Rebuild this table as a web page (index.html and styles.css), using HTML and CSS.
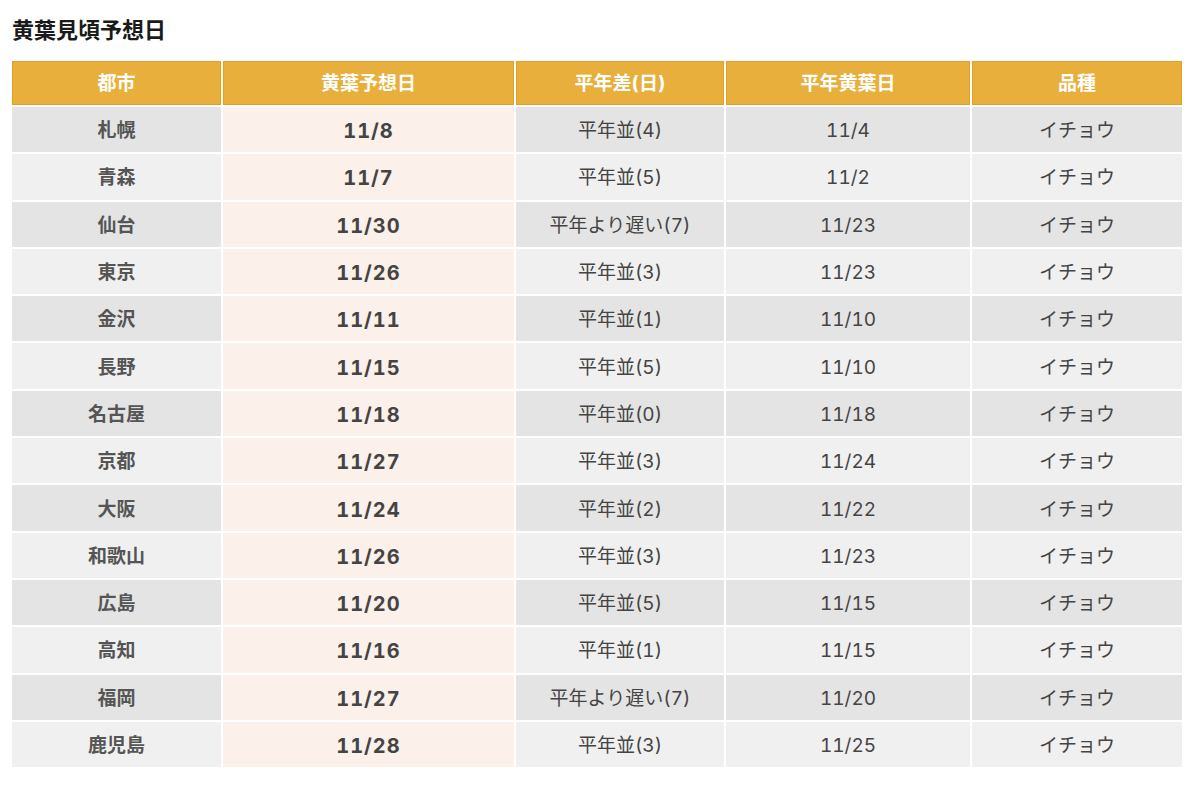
FILE: index.html
```html
<!DOCTYPE html>
<html lang="ja">
<head>
<meta charset="utf-8">
<link rel="stylesheet" href="styles.css">
</head>
<body>
<div class="page">
  <h2 class="title">黄葉見頃予想日</h2>
  <table class="tbl">
    <colgroup>
      <col class="c1"><col class="c2"><col class="c3"><col class="c4"><col class="c5">
    </colgroup>
    <thead>
      <tr><th>都市</th><th>黄葉予想日</th><th>平年差(日)</th><th>平年黄葉日</th><th>品種</th></tr>
    </thead>
    <tbody>
      <tr><td class="city">札幌</td><td class="date">11/8</td><td>平年並(4)</td><td>11/4</td><td>イチョウ</td></tr>
      <tr><td class="city">青森</td><td class="date">11/7</td><td>平年並(5)</td><td>11/2</td><td>イチョウ</td></tr>
      <tr><td class="city">仙台</td><td class="date">11/30</td><td>平年より遅い(7)</td><td>11/23</td><td>イチョウ</td></tr>
      <tr><td class="city">東京</td><td class="date">11/26</td><td>平年並(3)</td><td>11/23</td><td>イチョウ</td></tr>
      <tr><td class="city">金沢</td><td class="date">11/11</td><td>平年並(1)</td><td>11/10</td><td>イチョウ</td></tr>
      <tr><td class="city">長野</td><td class="date">11/15</td><td>平年並(5)</td><td>11/10</td><td>イチョウ</td></tr>
      <tr><td class="city">名古屋</td><td class="date">11/18</td><td>平年並(0)</td><td>11/18</td><td>イチョウ</td></tr>
      <tr><td class="city">京都</td><td class="date">11/27</td><td>平年並(3)</td><td>11/24</td><td>イチョウ</td></tr>
      <tr><td class="city">大阪</td><td class="date">11/24</td><td>平年並(2)</td><td>11/22</td><td>イチョウ</td></tr>
      <tr><td class="city">和歌山</td><td class="date">11/26</td><td>平年並(3)</td><td>11/23</td><td>イチョウ</td></tr>
      <tr><td class="city">広島</td><td class="date">11/20</td><td>平年並(5)</td><td>11/15</td><td>イチョウ</td></tr>
      <tr><td class="city">高知</td><td class="date">11/16</td><td>平年並(1)</td><td>11/15</td><td>イチョウ</td></tr>
      <tr><td class="city">福岡</td><td class="date">11/27</td><td>平年より遅い(7)</td><td>11/20</td><td>イチョウ</td></tr>
      <tr><td class="city">鹿児島</td><td class="date">11/28</td><td>平年並(3)</td><td>11/25</td><td>イチョウ</td></tr>
    </tbody>
  </table>
</div>
</body>
</html>
```

FILE: styles.css
```css
html, body {
  margin: 0;
  padding: 0;
  background: #ffffff;
}
.page {
  padding: 16px 0 0 10px;
  font-family: Inter, "Noto Sans CJK JP", sans-serif;
  font-variant-numeric: tabular-nums;
}
.title {
  margin: 0 0 0 2px;
  font-size: 22px;
  line-height: 28px;
  font-weight: 700;
  color: #1a1a1a;
}
.tbl {
  margin-top: 15px;
  width: 1174px;
  table-layout: fixed;
  border-collapse: separate;
  border-spacing: 2px;
}
.c1 { width: 209px; }
.c2 { width: 291px; }
.c3 { width: 208px; }
.c4 { width: 244px; }
.c5 { width: 210px; }
.tbl th {
  height: 44px;
  padding: 2px 0 0;
  box-sizing: border-box;
  background: #e8af3c;
  border: 1px solid #e0a020;
  color: #ffffff;
  font-size: 19px;
  line-height: 24px;
  font-weight: 700;
  text-align: center;
  vertical-align: middle;
}
.tbl td {
  height: 45.3px;
  padding: 3px 0 0;
  box-sizing: border-box;
  text-align: center;
  vertical-align: middle;
  font-size: 19px;
  line-height: 24px;
  color: #444444;
  background: #e4e4e4;
}
.tbl tbody tr:nth-child(even) td {
  background: #f0f0f0;
}
.tbl td.city {
  font-weight: 700;
  color: #555555;
}
.tbl tbody tr td.date {
  background: #fbf0ea;
  font-weight: 700;
  font-size: 20px;
  letter-spacing: 1px;
  color: #444444;
}
```
